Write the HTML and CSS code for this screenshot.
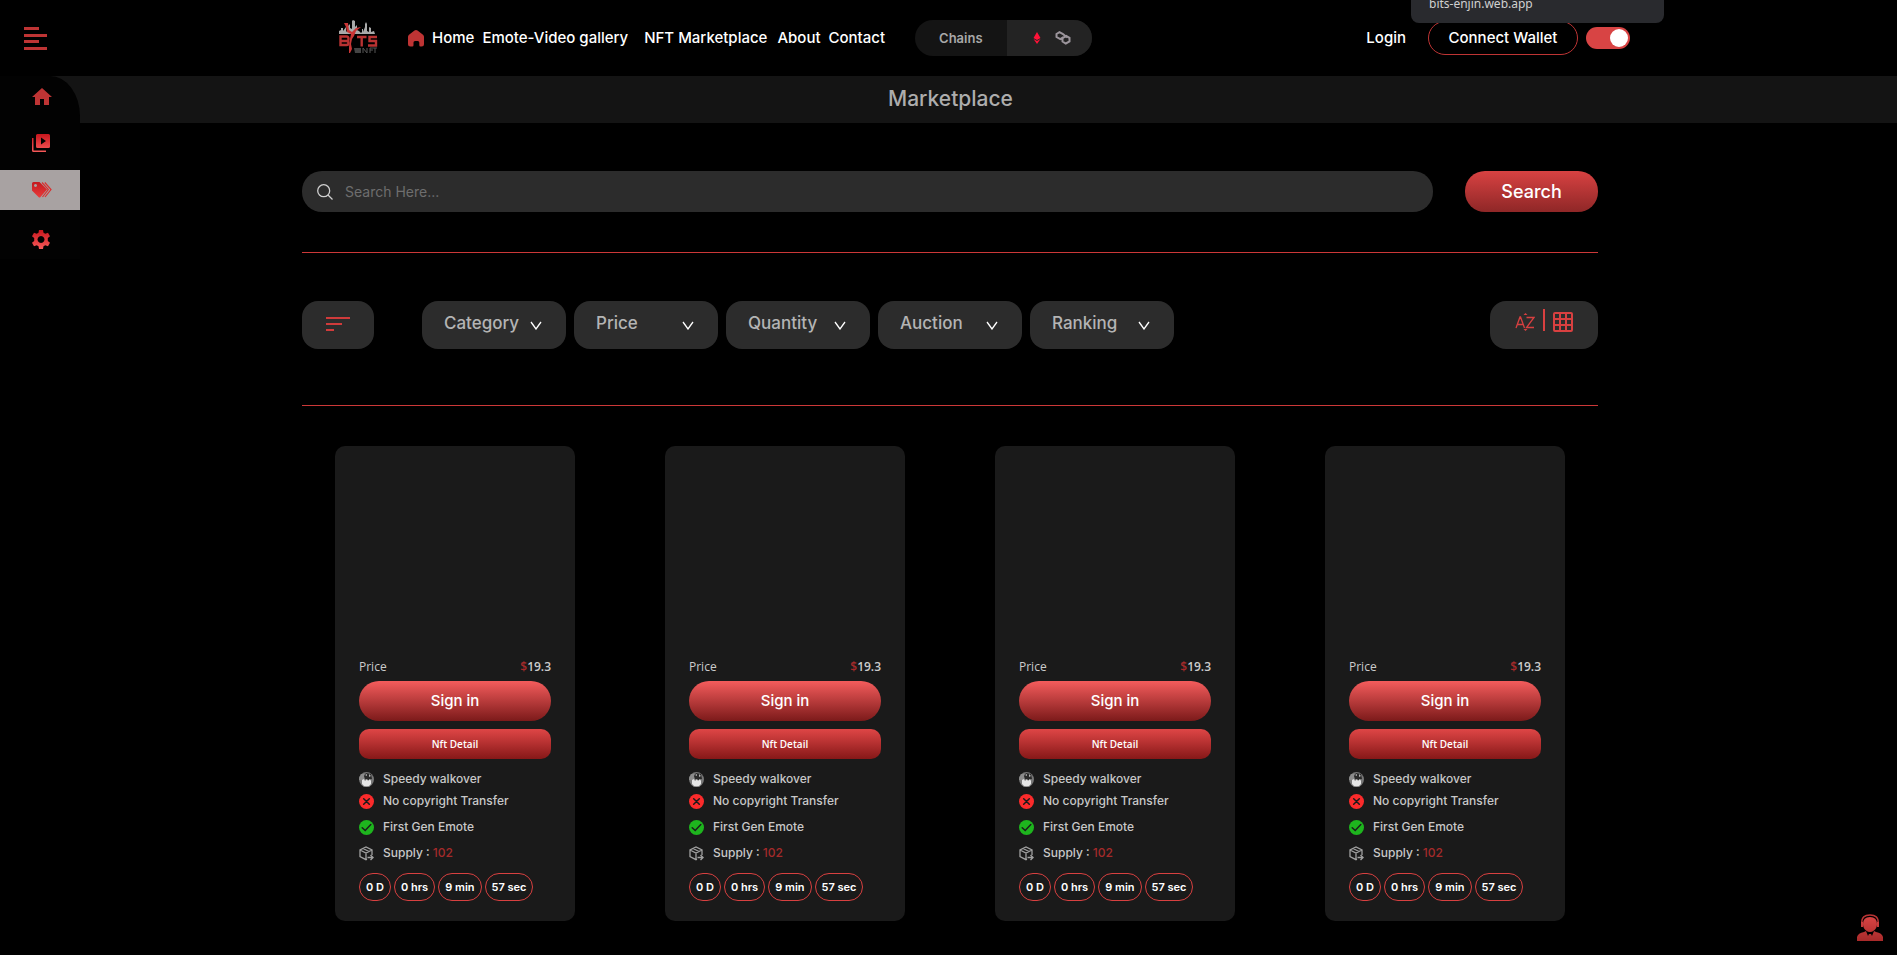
FILE: index.html
```html
<!DOCTYPE html>
<html lang="en">
<head>
<meta charset="utf-8">
<title>Marketplace</title>
<link rel="stylesheet" href="styles.css">
</head>
<body>
<svg class="defs" width="0" height="0" aria-hidden="true">
  <defs>
    <linearGradient id="g-red" x1="0" y1="0" x2="0" y2="1"><stop offset="0" stop-color="#c8161d"/><stop offset="1" stop-color="#f75a5a"/></linearGradient>
    <linearGradient id="g-tag" x1="0" y1="0" x2="0" y2="1"><stop offset="0" stop-color="#c41a1f"/><stop offset="1" stop-color="#e93b3b"/></linearGradient>
    <linearGradient id="g-agent" x1="0" y1="0" x2="0" y2="1"><stop offset="0" stop-color="#d84444"/><stop offset="1" stop-color="#a82a2a"/></linearGradient>
    <clipPath id="round"><circle cx="7.5" cy="7.5" r="7.5"/></clipPath>
    <symbol id="i-speed" viewBox="0 0 15 15"><g clip-path="url(#round)"><rect width="15" height="15" fill="#777"/><path d="M0 2h5v6H0z" fill="#8c8c8c"/><path d="M5 4l2-3 5 1 1 5-4 1-3-1z" fill="#2a2a2a"/><path d="M6 3l2-1v2zM10 2l2 2-2 1z" fill="#b5b5b5"/><path d="M3 8l2-1 1 2 2-2 1 2 2-2 1 2v3l-2 2H5l-2-2z" fill="#e6e6e6"/><path d="M1 12l3 2h7l3-2v4H1z" fill="#999"/></g></symbol>
    <symbol id="i-no" viewBox="0 0 15 15"><circle cx="7.5" cy="7.5" r="7.5" fill="#fb2b2b"/><path d="M4.7 4.7l5.6 5.6M10.3 4.7l-5.6 5.6" stroke="#1a1a1a" stroke-width="1.5" stroke-linecap="round"/></symbol>
    <symbol id="i-yes" viewBox="0 0 15 15"><circle cx="7.5" cy="7.5" r="7.5" fill="#1eb41e"/><path d="M3.2 7.7l3 2.8 5.6-6" fill="none" stroke="#1a1a1a" stroke-width="1.5" stroke-linecap="round"/></symbol>
    <symbol id="i-box" viewBox="0 0 15 15"><path d="M8 13.2l-1 .5-6-3V4l6-3 6 3v5M1 4l6 3 6-3M7 7v6.500M4 2.500l6 3" fill="none" stroke="#a0a0a0" stroke-width="1.3"/><path d="M8.500 11.500h5M11.500 9l2.500 2.500L11.500 14" fill="none" stroke="#a0a0a0" stroke-width="1.4"/></symbol>
    <symbol id="i-chev" viewBox="0 0 12 9"><path d="M1 1l5 7 5-7" fill="none" stroke="#fff" stroke-width="1.3"/></symbol>
  </defs>
</svg>

<header class="topbar">
  <button class="menu" aria-label="Menu"><svg width="23" height="23" viewBox="0 0 23 23" fill="#be3434"><path d="M0 0h15v3H0zM0 7h23v3H0zM0 13h15v3H0zM0 20h23v3H0z"/></svg></button>
  <a class="logo" href="#" aria-label="Bits NFT">
    <svg width="39" height="33" viewBox="0 0 39 33">
      <path d="M0 14v-3l2-1V8h2v3l3-4v5l2-2V6l2-2v4l2 1V1l1-1 2 1v6l2-2v5l2 1 2 2 1-1V9h1v3l2-5V4l1-2 1 2v7l2 1V7l2 1v4l3-1 1 3z" fill="#a9a9a9"/>
      <g fill="none" stroke="#b93232" stroke-width="2.4"><path d="M1.500 16.500h6q2 0 2 2.500t-2 2q2 0 2 2t-2 2h-6zM1.500 21h6M18 17h9.500M22.700 17v9.500M38 17h-7.500v4H37v4.500h-8"/></g>
      <path d="M5 3h4l1 7 3 2 4-4 5-1-5 4-2 5-2 3-1 5 1 5-2 4h-1v-6l1-8 1-5-4-2-1-5z" fill="#c93535"/>
      <path d="M15 28h7v5h-6z" fill="#444"/>
      <path d="M24 33v-5l4 5v-5M31 33v-5h3M31 30h3M34 28h4M36 28v5" fill="none" stroke="#555"/>
    </svg>
  </a>
  <nav class="nav">
    <a class="home" href="#"><svg width="16" height="17" viewBox="0 0 16 17"><path d="M6.500.5q1.500-1 3 0l5.500 4.200q1 .8 1 2V14q0 2.500-2.500 2.500h-1q-1.200 0-1.200-1.200V12.500q0-1.500-1.500-1.500H7q-1.500 0-1.500 1.500v2.800q0 1.200-1.200 1.200h-1.800Q0 16.500 0 14V6.700q0-1.200 1-2z" fill="#be3434"/></svg>Home</a>
    <a class="gallery" href="#">Emote-Video gallery</a>
    <a class="market" href="#">NFT Marketplace</a>
    <a class="about" href="#">About</a>
    <a href="#">Contact</a>
  </nav>
  <div class="chains">
    <span class="chains-label">Chains</span>
    <span class="chains-icons">
      <svg width="8" height="12" viewBox="0 0 8 12" fill="#ff1238"><path d="M4 0l3.500 6L4 8 .5 6zM.5 7L4 9l3.500-2L4 12z"/></svg>
      <svg width="16" height="14" viewBox="0 0 16 14" fill="none" stroke="#9c959c" stroke-width="2"><path d="M8.500 6.200L5.300 8.200 1.500 6V3L4.500 1.200 8 3l4 3.500M7.500 7.500v3l3.300 2 3.700-2V6.800L11.200 5 8 6.800"/></svg>
    </span>
  </div>
  <div class="account">
    <a href="#">Login</a>
    <button class="wallet">Connect Wallet</button>
    <input class="toggle" type="checkbox" checked aria-label="Dark theme">
  </div>
</header>
<div class="tooltip">bits-enjin.web.app</div>

<div class="shell">
  <aside class="side">
    <a href="#" aria-label="Home"><svg width="20" height="17" viewBox="0 0 20 17" fill="#be3434"><path d="M10 0l10 9h-3v8h-5v-6H8v6H3V9H0z"/></svg></a>
    <a href="#" aria-label="Videos"><svg width="18" height="18" viewBox="0 0 18 18" fill="url(#g-red)"><path fill-rule="evenodd" d="M5.500 0H16.500Q18 0 18 1.500V12.500Q18 14 16.500 14H5.500Q4 14 4 12.500V1.500Q4 0 5.500 0zM9 3.500v7l5-3.500zM0 4h1.500v12.500H14V18H1.500Q0 18 0 16.500z"/></svg></a>
    <a class="active" href="#" aria-label="Marketplace"><svg width="20" height="16" viewBox="0 0 20 16"><path fill="url(#g-tag)" fill-rule="evenodd" d="M0 1.500Q0 0 1.500 0H7.500L15 7.500 8.500 15Q7.500 16 6.500 15L0 8.500zM3.500 2a1.500 1.500 0 1 0 .01 0z"/><path d="M10 .5L16.300 7.500 10.500 15M12.800.5L19 7.500 13 15" fill="none" stroke="#d93030" stroke-width="1.2"/></svg></a>
    <a class="settings" href="#" aria-label="Settings"><svg width="18" height="19" viewBox="0 0 18 19"><path fill="url(#g-red)" fill-rule="evenodd" d="M7 0h4l.5 2.800 1.800 1 2.700-1 2 3.400-2.200 1.900v2.800L18 12.800l-2 3.400-2.700-1-1.800 1L11 19H7l-.5-2.800-1.800-1-2.700 1-2-3.400 2.200-1.900V8.100L0 6.200l2-3.400 2.700 1 1.800-1zM9 6a3.500 3.500 0 1 0 .01 0z"/></svg></a>
  </aside>

  <h1 class="title">Marketplace</h1>

  <main class="page">
    <div class="content">
      <form class="search">
        <label class="field">
          <svg width="16" height="16" viewBox="0 0 16 16" fill="none" stroke="#cfcfcf" stroke-width="1.3"><circle cx="6.700" cy="6.700" r="6"/><path d="M11 11l4.500 4.500"/></svg>
          <input type="search" placeholder="Search Here..." aria-label="Search">
        </label>
        <button class="go" type="button">Search</button>
      </form>
      <div class="filters">
        <button class="tile" aria-label="Filter"><svg width="24" height="14" viewBox="0 0 24 14" fill="#d03b3b"><path d="M0 0h24v2H0zM0 6h16v2H0zM0 12h8v2H0z"/></svg></button>
        <div class="selects">
          <label class="pick"><select aria-label="Category"><option>Category</option></select><svg width="12" height="9"><use href="#i-chev"/></svg></label>
          <label class="pick"><select aria-label="Price"><option>Price</option></select><svg width="12" height="9"><use href="#i-chev"/></svg></label>
          <label class="pick"><select aria-label="Quantity"><option>Quantity</option></select><svg width="12" height="9"><use href="#i-chev"/></svg></label>
          <label class="pick"><select aria-label="Auction"><option>Auction</option></select><svg width="12" height="9"><use href="#i-chev"/></svg></label>
          <label class="pick"><select aria-label="Ranking"><option>Ranking</option></select><svg width="12" height="9"><use href="#i-chev"/></svg></label>
        </div>
        <div class="views">
          <button aria-label="Sort alphabetically"><svg width="20" height="18" viewBox="0 0 20 18" fill="none" stroke="#d84040" stroke-width="1.3"><path d="M1 15L5 4h.5l4 11M2.500 11.500h6M11.500 4.500h7.500l-7.500 10h7.500"/><path d="M8.500 2L10.500 0l2 2zM8.500 16l2 2 2-2z" fill="#d84040" stroke="none"/></svg></button>
          <span class="bar"></span>
          <button aria-label="Grid view"><svg width="20" height="20" viewBox="0 0 20 20" fill="none" stroke="#d84040" stroke-width="2"><rect x="1" y="1" width="18" height="18" rx="1"/><path d="M7 1v18M13 1v18M1 7h18M1 13h18"/></svg></button>
        </div>
      </div>
      <section class="cards" id="cards"></section>
    </div>
  </main>
</div>

<button class="support" aria-label="Support"><svg width="26" height="28" viewBox="0 0 26 28"><path d="M5 10C4 3 8 1 13 1s9 2 8 9" fill="none" stroke="#b93434" stroke-width="1.5"/><path d="M6 10q0-7 7-7t7 7q0 4-3 6.500-4 3-8 0Q6 14 6 10zM4 8h2v5H4zM20 8h2v5h-2zM0 27v-4q1-4 7-5l2-1 2 5 1-2h2l1 2 2-5 2 1q6 1 7 5v4z" fill="url(#g-agent)"/></svg></button>

<template id="card">
  <article class="card">
    <div class="art"></div>
    <div class="price"><span>Price</span><b><i>$</i>19.3</b></div>
    <button class="signin">Sign in</button>
    <button class="detail">Nft Detail</button>
    <ul class="facts">
      <li><svg width="15" height="15"><use href="#i-speed"/></svg>Speedy walkover</li>
      <li class="tight"><svg width="15" height="15"><use href="#i-no"/></svg>No copyright Transfer</li>
      <li><svg width="15" height="15"><use href="#i-yes"/></svg>First Gen Emote</li>
      <li><svg width="15" height="15"><use href="#i-box"/></svg><span>Supply : <em>102</em></span></li>
    </ul>
    <div class="timer"><span>0 D</span><span>0 hrs</span><span>9 min</span><span>57 sec</span></div>
  </article>
</template>
<script src="cards.js"></script>
</body>
</html>
```
FILE: styles.css
```css
* { box-sizing: border-box; }
body { margin: 0; min-height: 100vh; background: #000; color: #fff; font: 500 15px/24px Inter, "Open Sans", sans-serif; }
a { color: inherit; text-decoration: none; }
button, select, input { font: inherit; color: inherit; border: 0; margin: 0; padding: 0; background: none; }
button { cursor: pointer; }
svg { display: block; flex: none; }
.defs { position: absolute; }

.topbar { display: flex; align-items: center; height: 76px; padding: 0 267px 0 24px; }
.menu { margin-right: 292px; }
.logo { margin: 0 30px 4px 0; }
.nav { display: flex; align-items: center; white-space: nowrap; }
.home { display: flex; align-items: center; gap: 8px; margin-right: 8px; }
.gallery { margin-right: 16px; }
.market { margin-right: 10px; }
.about { margin-right: 8px; }
.chains { display: flex; height: 36px; margin-left: 30px; border-radius: 18px; overflow: hidden; background: #141414; }
.chains-label { width: 92px; padding-left: 24px; line-height: 36px; font-size: 13px; font-weight: 600; color: #a8a8a8; }
.chains-icons { display: flex; align-items: center; gap: 14px; width: 85px; padding-left: 26px; background: #232323; }
.account { display: flex; align-items: center; gap: 8px; margin-left: auto; }
.account a { margin-right: 14px; }
.wallet { width: 150px; height: 34px; border: 1px solid #be3434; border-radius: 17px; }
.toggle { appearance: none; display: flex; justify-content: flex-end; align-items: center; width: 44px; height: 22px; padding: 2px; border-radius: 11px; background: #d84444; }
.toggle::before { content: ""; width: 18px; height: 18px; border-radius: 50%; background: #fff; }
.tooltip { position: absolute; top: -24px; right: 233px; width: 253px; height: 47px; padding: 16px 18px; border-radius: 8px; background: #292a2e; color: #d0d0d0; font: 400 12px/24px "Noto Sans", sans-serif; }

.shell { position: relative; }
.side { position: absolute; top: 0; left: 0; width: 80px; display: flex; flex-direction: column; gap: 7px; border-top-right-radius: 30px 40px; background: #020202; }
.side a { display: flex; align-items: center; height: 40px; padding-left: 32px; }
.side .active { background: #a8a2a2; }
.side .settings { margin-top: 2px; }
.title { margin: 0; padding: 0 0 1px 4px; background: #141414; color: #adadad; font-size: 21px; font-weight: 500; line-height: 46px; text-align: center; }

.page { padding-left: 3px; }
.content { width: 1296px; max-width: 90%; margin: 0 auto; }
.search { display: flex; gap: 32px; padding: 48px 0 40px; border-bottom: 1px solid #cc3838; }
.field { flex: 1; display: flex; align-items: center; gap: 12px; height: 41px; padding: 0 15px; border-radius: 20px; background: #2c2c2c; }
.field input { flex: 1; outline: 0; font-size: 14px; font-weight: 400; }
.field input::placeholder { color: #6e6e6e; }
.go { width: 133px; height: 41px; border-radius: 20px; background: linear-gradient(#d84242, #8f2727); font-size: 18px; }

.filters { display: flex; padding: 48px 0 56px; border-bottom: 1px solid #cc3838; }
.tile, .pick, .views { height: 48px; border-radius: 16px; background: #2c2c2c; }
.tile { display: grid; place-items: center; width: 72px; padding-bottom: 2px; margin-right: 48px; }
.selects { display: flex; gap: 8px; }
.pick { display: grid; grid-template-columns: 1fr 36px; align-items: center; width: 144px; }
.pick select { grid-area: 1 / 1 / 2 / 3; height: 48px; padding: 0 0 4px 22px; appearance: none; color: #b4b4b4; font-size: 17px; outline: 0; }
.pick svg { grid-area: 1 / 2; pointer-events: none; }
.views { display: flex; align-items: center; gap: 8px; width: 108px; padding: 0 25px 6px; margin-left: auto; }
.bar { width: 2px; height: 22px; margin-bottom: 4px; background: #d84040; }

.cards { display: grid; grid-template-columns: repeat(4, 1fr); justify-items: center; margin: 40px -12px 0; padding-bottom: 32px; }
.card { width: 240px; padding: 0 24px 20px; border-radius: 10px; background: #1a1a1a; }
.art { height: 210px; }
.price { display: flex; justify-content: space-between; height: 25px; color: #ccc; font: 500 12px/22px "Open Sans", sans-serif; }
.price b { font-weight: 600; }
.price i { color: #a52a2a; font-style: normal; }
.signin, .detail { display: block; width: 100%; }
.signin { height: 40px; border-radius: 20px; background: linear-gradient(#f45c5c, #7c1a1a); }
.detail { height: 30px; margin-top: 8px; border-radius: 10px; background: linear-gradient(#df4646, #861818); font: 600 10px/30px "Open Sans", sans-serif; }
.facts { list-style: none; margin: 10px 0; padding: 0; color: #c8c8c8; font-size: 12px; line-height: 20px; }
.facts li { display: flex; align-items: center; gap: 9px; height: 20px; margin-top: 6px; }
.facts .tight { margin-top: 2px; }
.facts li:first-child { margin-top: 0; }
.facts em { color: #a52a2a; font-style: normal; }
.timer { display: flex; gap: 3px; }
.timer span { height: 28px; padding: 0 6px; border: 1px solid #d84040; border-radius: 14px; font-size: 11px; line-height: 26px; font-weight: 600; white-space: nowrap; }

.support { position: fixed; right: 14px; bottom: 13px; }
```
FILE: cards.js
```js
const list = document.getElementById("cards");
const card = document.getElementById("card");
for (let i = 0; i < 4; i++) {
  list.append(card.content.cloneNode(true));
}
```
